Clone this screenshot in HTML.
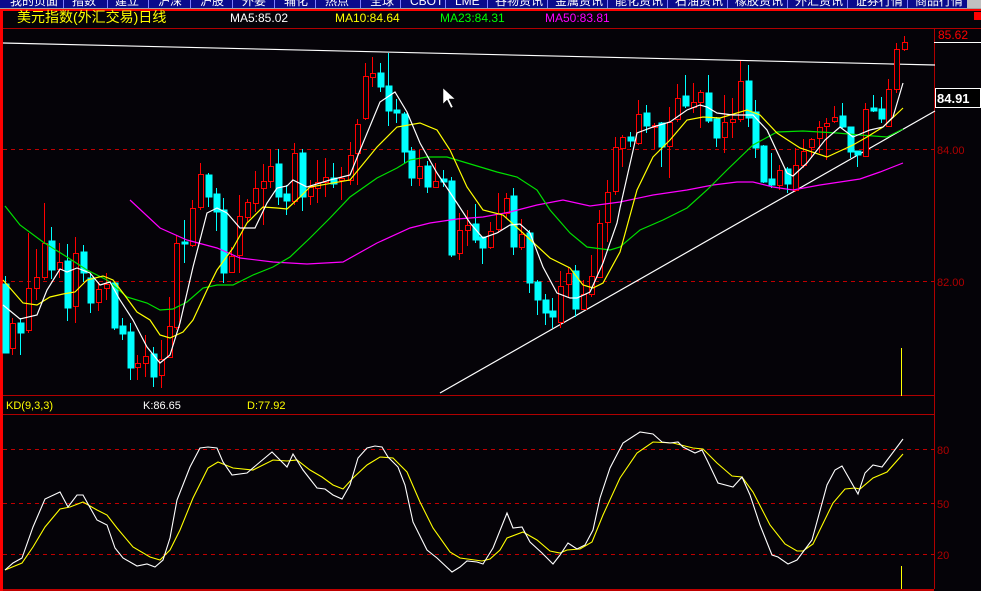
<!DOCTYPE html>
<html><head><meta charset="utf-8"><style>
html,body{margin:0;padding:0;background:#050308;width:981px;height:591px;overflow:hidden}
svg{display:block}
text{font-family:"Liberation Sans","Noto Sans CJK SC",sans-serif}
</style></head><body>
<svg width="981" height="591" viewBox="0 0 981 591" xmlns="http://www.w3.org/2000/svg" shape-rendering="crispEdges">
<rect width="981" height="591" fill="#050308"/>
<rect x="0" y="0" width="967" height="8" fill="#0a0a8c"/>
<rect x="967" y="0" width="14" height="8" fill="#c0c0c0"/>
<path stroke="#7f7fff" d="M63.5 0V8M107.5 0V8M148.5 0V8M190.5 0V8M232.5 0V8M274.5 0V8M315.5 0V8M360.5 0V8M400.5 0V8M445.5 0V8M487.5 0V8M547.5 0V8M607.5 0V8M667.5 0V8M727.5 0V8M787.5 0V8M847.5 0V8M907.5 0V8"/>
<g fill="#ffffff" font-size="12">
<text x="10" y="5">我的页面</text><text x="72" y="5">指数</text><text x="115" y="5">建立</text><text x="158" y="5">沪深</text><text x="200" y="5">沪股</text><text x="242" y="5">外要</text><text x="284" y="5">辅化</text><text x="325" y="5">热点</text><text x="370" y="5">全球</text><text x="410" y="5">CBOT</text><text x="455" y="5">LME</text><text x="495" y="5">谷物资讯</text><text x="555" y="5">金属资讯</text><text x="615" y="5">能化资讯</text><text x="675" y="5">石油资讯</text><text x="735" y="5">橡胶资讯</text><text x="795" y="5">外汇资讯</text><text x="855" y="5">证券行情</text><text x="915" y="5">商品行情</text>
</g>
<rect x="0" y="8" width="981" height="1" fill="#a0a0a0"/>
<rect x="0" y="9" width="981" height="2" fill="#ff0000"/>
<rect x="0" y="9" width="3" height="582" fill="#ff0000"/>
<rect x="974" y="12" width="7" height="8" fill="#ff0000"/>
<text x="17" y="22" font-size="14" fill="#ffff00">美元指数(外汇交易)日线</text>
<text x="230" y="22" font-size="12" fill="#ffffff">MA5:85.02</text>
<text x="335" y="22" font-size="12" fill="#ffff00">MA10:84.64</text>
<text x="440" y="22" font-size="12" fill="#00ff00">MA23:84.31</text>
<text x="545" y="22" font-size="12" fill="#ff00ff">MA50:83.81</text>
<path stroke="#b00000" fill="none" d="M3 28.5H981M3 395.5H934M3 414.5H934M934.5 28V589"/>
<rect x="3" y="589" width="931" height="2" fill="#c00000"/>
<path stroke="#c00000" stroke-dasharray="4,4" fill="none" d="M3 149.5H934M3 281.5H934M3 449.5H934M3 503.5H934M3 554.5H934"/>
<g fill="#b00000" font-size="11">
<text x="937" y="154">84.00</text><text x="937" y="286">82.00</text>
<text x="937" y="454">80</text><text x="937" y="508">50</text><text x="937" y="559">20</text>
</g>
<path d="M934 42.5H981" stroke="#ffffff"/>
<text x="938" y="39" font-size="12" fill="#ff0000">85.62</text>
<rect x="935.5" y="88.5" width="45" height="19" fill="#000" stroke="#ffffff"/>
<text x="937" y="103" font-size="13" font-weight="bold" fill="#ffffff">84.91</text>
<g stroke="#ffffff" stroke-width="1.2" fill="none" shape-rendering="auto">
<path d="M3 43L935 65"/><path d="M440 393L935 111"/>
</g>
<g fill="#00ffff" stroke="#00ffff">
<path fill="none" d="M5.5 276V353M20.5 318V355M51.5 227V279M67.5 244V321M83.5 245V282M90.5 273V313M114.5 282V330M122.5 318V340M130.5 323V380M153.5 347V387M184.5 220V263M208.5 173V207M216.5 188V231M223.5 198V283M278.5 149V205M286.5 185V215M302.5 149V211M333.5 163V188M380.5 63V92M388.5 53V126M396.5 99V123M404.5 112V163M411.5 147V186M427.5 161V193M443.5 170V187M451.5 177V257M475.5 204V243M482.5 237V264M513.5 188V255M529.5 230V293M537.5 280V315M545.5 294V325M552.5 298V328M575.5 265V317M630.5 132V147M646.5 105V133M661.5 122V167M685.5 75V108M708.5 75V123M716.5 117V147M748.5 65V127M755.5 100V158M763.5 145V183M771.5 153V188M787.5 167V193M842.5 103V128M850.5 127V158M857.5 151V167M873.5 95V112M881.5 97V123"/>
<rect x="3" y="284" width="6" height="69"/><rect x="18" y="323" width="6" height="10"/><rect x="49" y="241" width="6" height="29"/><rect x="65" y="261" width="6" height="47"/><rect x="81" y="252" width="6" height="21"/><rect x="88" y="278" width="6" height="25"/><rect x="112" y="283" width="6" height="45"/><rect x="120" y="326" width="6" height="8"/><rect x="128" y="332" width="6" height="36"/><rect x="151" y="354" width="6" height="23"/><rect x="182" y="242" width="6" height="2"/><rect x="206" y="175" width="6" height="22"/><rect x="214" y="194" width="6" height="18"/><rect x="221" y="210" width="6" height="63"/><rect x="276" y="164" width="6" height="33"/><rect x="284" y="194" width="6" height="7"/><rect x="300" y="153" width="6" height="44"/><rect x="331" y="178" width="6" height="6"/><rect x="378" y="73" width="6" height="14"/><rect x="386" y="86" width="6" height="25"/><rect x="394" y="110" width="6" height="3"/><rect x="402" y="114" width="6" height="38"/><rect x="409" y="151" width="6" height="27"/><rect x="425" y="166" width="6" height="21"/><rect x="441" y="179" width="6" height="3"/><rect x="449" y="181" width="6" height="74"/><rect x="473" y="224" width="6" height="16"/><rect x="480" y="237" width="6" height="11"/><rect x="511" y="196" width="6" height="51"/><rect x="527" y="233" width="6" height="50"/><rect x="535" y="282" width="6" height="18"/><rect x="543" y="300" width="6" height="13"/><rect x="550" y="311" width="6" height="6"/><rect x="573" y="271" width="6" height="38"/><rect x="628" y="137" width="6" height="4"/><rect x="644" y="113" width="6" height="13"/><rect x="659" y="123" width="6" height="24"/><rect x="683" y="96" width="6" height="10"/><rect x="706" y="93" width="6" height="28"/><rect x="714" y="119" width="6" height="19"/><rect x="746" y="81" width="6" height="37"/><rect x="753" y="112" width="6" height="36"/><rect x="761" y="146" width="6" height="36"/><rect x="769" y="179" width="6" height="6"/><rect x="785" y="169" width="6" height="15"/><rect x="840" y="116" width="6" height="11"/><rect x="848" y="127" width="6" height="25"/><rect x="855" y="151" width="6" height="4"/><rect x="871" y="108" width="6" height="3"/><rect x="879" y="109" width="6" height="10"/>
</g>
<g stroke="#ff0000" fill="#050308">
<path fill="none" d="M12.5 318V355M28.5 233V333M36.5 249V300M44.5 203V280M59.5 243V278M75.5 237V323M98.5 282V311M106.5 273V300M137.5 355V380M145.5 335V377M161.5 340V388M169.5 297V358M176.5 235V330M192.5 200V247M200.5 163V210M231.5 247V273M239.5 195V273M247.5 199V222M255.5 171V212M263.5 164V225M270.5 149V188M294.5 143V205M310.5 180V205M317.5 160V203M325.5 158V197M341.5 167V200M350.5 142V185M357.5 119V185M365.5 63V120M372.5 57V87M419.5 150V186M435.5 163V188M459.5 213V260M467.5 210V246M490.5 222V249M498.5 193V233M506.5 193V218M521.5 219V250M560.5 271V328M568.5 267V297M583.5 280V310M591.5 255V297M599.5 210V278M607.5 180V242M615.5 137V195M622.5 135V167M638.5 100V145M654.5 123V149M669.5 107V178M677.5 84V122M693.5 83V113M700.5 90V128M724.5 95V153M732.5 98V138M740.5 61V122M779.5 165V190M795.5 148V192M803.5 139V168M811.5 138V158M819.5 121V153M826.5 118V160M834.5 106V123M865.5 103V157M888.5 79V127M896.5 43V93M904.5 36V51"/>
<rect x="10.5" y="323.5" width="5" height="25"/><rect x="26.5" y="288.5" width="5" height="42"/><rect x="34.5" y="277.5" width="5" height="11"/><rect x="42.5" y="243.5" width="5" height="34"/><rect x="57.5" y="262.5" width="5" height="7"/><rect x="73.5" y="253.5" width="5" height="53"/><rect x="96.5" y="289.5" width="5" height="13"/><rect x="104.5" y="284.5" width="5" height="4"/><rect x="135.5" y="363.5" width="5" height="4"/><rect x="143.5" y="356.5" width="5" height="7"/><rect x="159.5" y="359.5" width="5" height="16"/><rect x="167.5" y="326.5" width="5" height="31"/><rect x="174.5" y="243.5" width="5" height="84"/><rect x="190.5" y="208.5" width="5" height="37"/><rect x="198.5" y="174.5" width="5" height="33"/><rect x="229.5" y="256.5" width="5" height="16"/><rect x="237.5" y="216.5" width="5" height="39"/><rect x="245.5" y="202.5" width="5" height="15"/><rect x="253.5" y="188.5" width="5" height="15"/><rect x="261.5" y="181.5" width="5" height="7"/><rect x="268.5" y="166.5" width="5" height="15"/><rect x="292.5" y="153.5" width="5" height="48"/><rect x="308.5" y="187.5" width="5" height="9"/><rect x="315.5" y="182.5" width="5" height="6"/><rect x="323.5" y="177.5" width="5" height="5"/><rect x="339.5" y="178.5" width="5" height="2"/><rect x="348.5" y="155.5" width="5" height="25"/><rect x="355.5" y="124.5" width="5" height="29"/><rect x="363.5" y="76.5" width="5" height="42"/><rect x="370.5" y="73.5" width="5" height="4"/><rect x="417.5" y="166.5" width="5" height="12"/><rect x="433.5" y="181.5" width="5" height="6"/><rect x="457.5" y="230.5" width="5" height="23"/><rect x="465.5" y="225.5" width="5" height="5"/><rect x="488.5" y="231.5" width="5" height="16"/><rect x="496.5" y="213.5" width="5" height="16"/><rect x="504.5" y="198.5" width="5" height="15"/><rect x="519.5" y="234.5" width="5" height="13"/><rect x="558.5" y="286.5" width="5" height="36"/><rect x="566.5" y="273.5" width="5" height="11"/><rect x="581.5" y="294.5" width="5" height="15"/><rect x="589.5" y="276.5" width="5" height="18"/><rect x="597.5" y="223.5" width="5" height="54"/><rect x="605.5" y="192.5" width="5" height="30"/><rect x="613.5" y="147.5" width="5" height="44"/><rect x="620.5" y="137.5" width="5" height="11"/><rect x="636.5" y="114.5" width="5" height="29"/><rect x="652.5" y="125.5" width="5" height="2"/><rect x="667.5" y="122.5" width="5" height="24"/><rect x="675.5" y="98.5" width="5" height="21"/><rect x="691.5" y="102.5" width="5" height="5"/><rect x="698.5" y="92.5" width="5" height="10"/><rect x="722.5" y="122.5" width="5" height="15"/><rect x="730.5" y="119.5" width="5" height="3"/><rect x="738.5" y="81.5" width="5" height="38"/><rect x="777.5" y="170.5" width="5" height="15"/><rect x="793.5" y="165.5" width="5" height="25"/><rect x="801.5" y="151.5" width="5" height="14"/><rect x="809.5" y="139.5" width="5" height="8"/><rect x="817.5" y="127.5" width="5" height="11"/><rect x="824.5" y="123.5" width="5" height="3"/><rect x="832.5" y="117.5" width="5" height="4"/><rect x="863.5" y="109.5" width="5" height="47"/><rect x="886.5" y="89.5" width="5" height="37"/><rect x="894.5" y="49.5" width="5" height="40"/><rect x="902.5" y="42.5" width="5" height="7"/>
</g>
<g fill="none" stroke-width="1.2" shape-rendering="auto">
<polyline stroke="#ff00ff" points="130,200 160,228 187,240 217,248 240,258 273,262 307,264 343,262 377,243 410,228 430,223 457,219 483,217 510,212 537,205 563,200 590,206 620,202 653,195 687,190 713,185 737,182 753,182 773,187 793,190 820,185 860,179 880,172 903,163"/>
<polyline stroke="#00e000" points="5,206 20,225 43,242 67,257 87,270 107,280 127,297 147,303 160,310 173,309 187,302 203,288 217,285 233,285 253,275 273,267 290,257 310,238 330,218 350,197 377,178 397,168 410,160 427,157 447,157 467,163 497,172 517,177 537,190 550,210 570,233 587,247 610,250 620,247 640,230 663,220 687,208 707,190 727,170 753,145 777,132 803,131 837,133 860,135 887,137 903,129"/>
<polyline stroke="#ffff00" points="3,280 23,303 37,305 50,297 63,294 75,292 87,280 103,276 113,280 123,293 137,312 150,320 160,335 170,338 183,332 193,320 207,290 217,270 233,248 247,223 263,207 277,208 287,209 300,197 310,187 350,180 377,147 397,127 420,123 437,130 450,150 467,187 483,210 503,215 523,233 550,258 570,268 583,285 593,288 603,283 620,252 637,190 653,157 670,140 687,120 703,117 720,118 747,110 760,115 777,133 800,148 827,157 853,145 867,137 883,127 903,108"/>
<polyline stroke="#ffffff" points="3,305 20,319 37,315 47,290 60,269 67,272 77,268 90,273 100,285 110,282 120,300 133,320 147,347 160,363 170,355 180,323 193,267 207,213 217,208 227,213 240,228 255,228 267,203 277,188 287,186 293,180 307,187 330,180 350,175 363,143 380,102 395,92 407,112 420,143 437,173 457,203 470,223 483,238 497,233 510,225 520,224 530,233 543,267 557,293 570,298 577,298 590,292 603,263 617,223 620,208 637,133 653,127 670,122 687,110 700,105 707,107 717,113 733,115 753,115 767,130 787,173 793,176 807,163 825,140 840,127 853,137 870,130 883,127 893,117 903,83"/>
</g>
<path d="M443 88V104L447 100L451 108L453 107L449 99L455 99Z" fill="#ffffff" stroke="#000" stroke-width="0.5" shape-rendering="auto"/>
<path d="M901.5 348V395M901.5 380V396M901.5 566V589" stroke="#ffff00"/>
<text x="6" y="409" font-size="11" fill="#ffff00">KD(9,3,3)</text>
<text x="143" y="409" font-size="11" fill="#ffffff">K:86.65</text>
<text x="247" y="409" font-size="11" fill="#ffff00">D:77.92</text>
<g fill="none" stroke-width="1.1" shape-rendering="auto">
<polyline stroke="#ffff00" points="5,570 22,563 33,547 45,527 60,509 70,507 83,502 97,510 107,515 117,528 133,547 150,557 160,560 170,550 180,530 193,498 208,468 218,462 233,468 253,470 273,460 287,461 297,460 310,470 322,477 333,485 343,489 353,478 367,465 380,457 393,458 407,472 420,502 433,528 450,552 460,558 482,561 490,559 500,550 507,538 523,532 537,540 550,551 560,553 567,550 580,549 592,542 603,515 620,478 637,453 653,442 673,443 693,448 703,449 717,463 732,476 742,477 753,492 770,525 785,544 797,551 803,551 813,544 833,503 845,489 855,488 860,489 873,478 887,472 903,454"/>
<polyline stroke="#ffffff" points="5,570 13,563 22,558 33,527 45,499 60,492 68,507 77,495 83,495 97,520 107,525 115,548 123,558 137,566 147,564 155,567 163,560 170,538 177,500 190,467 200,448 208,447 217,448 223,462 232,475 247,473 260,462 272,452 287,467 293,454 303,470 317,488 325,489 333,495 342,499 350,485 358,458 367,448 375,446 382,447 388,457 398,467 405,485 413,522 427,550 437,558 452,572 460,567 467,561 477,562 483,564 493,548 507,513 513,528 522,527 530,542 542,553 553,564 560,555 568,543 577,549 585,545 593,530 600,498 610,468 623,443 640,432 653,434 662,442 670,443 678,442 683,447 695,453 702,450 708,462 718,483 733,487 742,477 750,495 760,525 772,555 778,557 788,564 797,560 812,540 827,485 835,470 842,466 858,494 865,473 873,465 882,467 903,439"/>
</g>
</svg>
</body></html>
